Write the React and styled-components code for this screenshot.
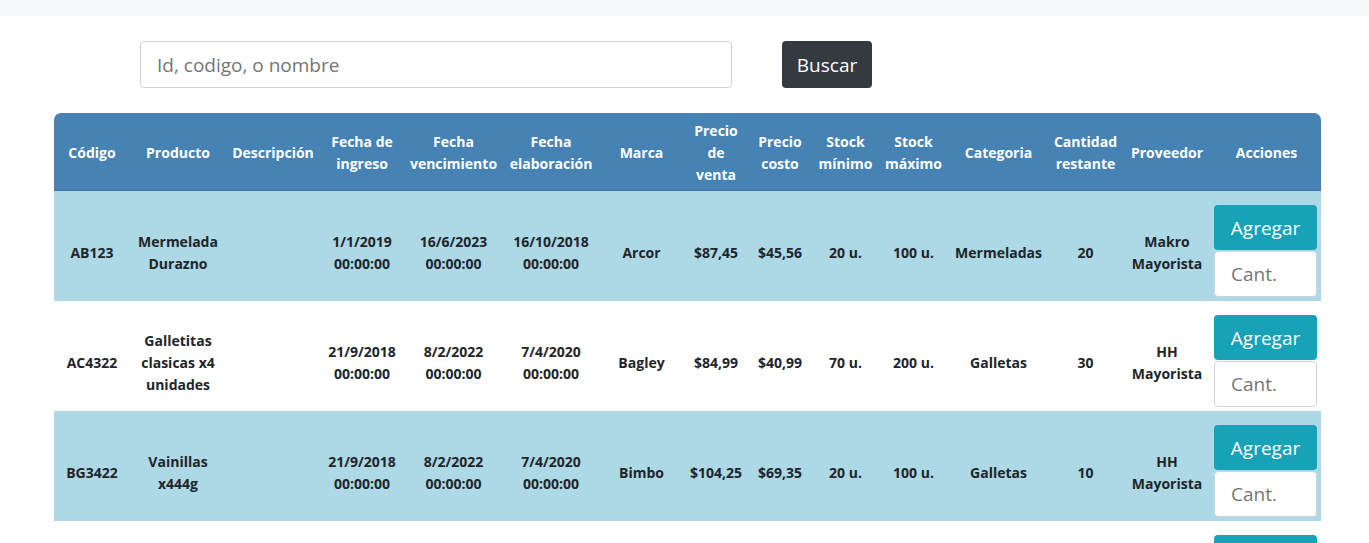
import React from 'react';
import styled, { createGlobalStyle } from "styled-components"

const GlobalStyle = createGlobalStyle`
    body {
        margin: 0;
        background: #fff;
        font-family: "Open Sans", "Noto Sans", sans-serif;
        color: #212529;
    }
`

const TopBar = styled.div`
    height: 16px;
    background: #f8f9fa;
`

const SearchRow = styled.div`
    display: flex;
    align-items: center;
    padding: 25px 0 0 140px;
    gap: 50px;
`

const SearchInput = styled.input`
    width: 592px;
    height: 47px;
    box-sizing: border-box;
    border: 1px solid #ced4da;
    border-radius: 4px;
    padding: 0 16px;
    font-family: inherit;
    font-size: 19px;
    color: #495057;
    outline: none;

    ::placeholder {
        color: #6c757d;
    }
`

const DarkButton = styled.button`
    width: 90px;
    height: 47px;
    border: none;
    border-radius: 4px;
    background: #343a40;
    color: #fff;
    font-family: inherit;
    font-size: 19px;
`

const Table = styled.table`
    margin: 25px 0 0 54px;
    width: 1267px;
    table-layout: fixed;
    border-collapse: separate;
    border-spacing: 0;
    font-size: 14px;
    font-weight: 700;
    line-height: 22px;
    text-align: center;

    th {
        background: #4682b4;
        color: #fff;
        padding: 7px 2px 4px;
        height: 66px;
        border-bottom: 1px solid #3f76a5;
        vertical-align: middle;
    }
    th:first-child { border-top-left-radius: 7px; }
    th:last-child { border-top-right-radius: 7px; }
`

const Row = styled.tr`
    background: ${props => props.shaded ? "#add8e6" : "#fff"};

    td {
        height: 92px;
        padding: 16px 2px 2px;
        vertical-align: middle;
        color: #212529;
    }
`

const ActionCell = styled.td`
    && {
        padding: 14px 3px 4px 2px;
    }
    display: flex;
`

const Actions = styled.div`
    display: flex;
    flex-direction: column;
    gap: 1px;
    width: 103px;
`

const AddButton = styled.button`
    height: 46px;
    border: none;
    border-radius: 4px;
    background: #17a2b8;
    color: #fff;
    font-family: inherit;
    font-size: 19px;
`

const QtyInput = styled.input`
    height: 47px;
    box-sizing: border-box;
    border: 1px solid #ced4da;
    border-radius: 4px;
    padding: 0 16px;
    font-family: inherit;
    font-size: 19px;
    background: #fff;
    outline: none;

    ::placeholder {
        color: #6c757d;
    }
`

const columns = [
    { label: ["Código"], width: 76 },
    { label: ["Producto"], width: 96 },
    { label: ["Descripción"], width: 94 },
    { label: ["Fecha de", "ingreso"], width: 84 },
    { label: ["Fecha", "vencimiento"], width: 99 },
    { label: ["Fecha", "elaboración"], width: 96 },
    { label: ["Marca"], width: 85 },
    { label: ["Precio", "de", "venta"], width: 64 },
    { label: ["Precio", "costo"], width: 64 },
    { label: ["Stock", "mínimo"], width: 67 },
    { label: ["Stock", "máximo"], width: 69 },
    { label: ["Categoria"], width: 101 },
    { label: ["Cantidad", "restante"], width: 73 },
    { label: ["Proveedor"], width: 90 },
    { label: ["Acciones"], width: 109 },
]

const productos = [
    {
        codigo: "AB123", producto: ["Mermelada", "Durazno"], descripcion: "",
        ingreso: "1/1/2019", vencimiento: "16/6/2023", elaboracion: "16/10/2018",
        marca: "Arcor", venta: "$87,45", costo: "$45,56", min: "20 u.", max: "100 u.",
        categoria: "Mermeladas", cantidad: 20, proveedor: ["Makro", "Mayorista"]
    },
    {
        codigo: "AC4322", producto: ["Galletitas", "clasicas x4", "unidades"], descripcion: "",
        ingreso: "21/9/2018", vencimiento: "8/2/2022", elaboracion: "7/4/2020",
        marca: "Bagley", venta: "$84,99", costo: "$40,99", min: "70 u.", max: "200 u.",
        categoria: "Galletas", cantidad: 30, proveedor: ["HH", "Mayorista"]
    },
    {
        codigo: "BG3422", producto: ["Vainillas", "x444g"], descripcion: "",
        ingreso: "21/9/2018", vencimiento: "8/2/2022", elaboracion: "7/4/2020",
        marca: "Bimbo", venta: "$104,25", costo: "$69,35", min: "20 u.", max: "100 u.",
        categoria: "Galletas", cantidad: 10, proveedor: ["HH", "Mayorista"]
    },
    {
        codigo: "CD1200", producto: ["Dulce de", "leche"], descripcion: "",
        ingreso: "3/3/2020", vencimiento: "3/3/2022", elaboracion: "1/3/2020",
        marca: "Sancor", venta: "$120,00", costo: "$80,50", min: "10 u.", max: "50 u.",
        categoria: "Lácteos", cantidad: 15, proveedor: ["Makro", "Mayorista"]
    },
]

const Lines = ({ lines }) => lines.map((l, i) => (
    <React.Fragment key={i}>{i > 0 && <br />}{l}</React.Fragment>
))

const Fecha = ({ value }) => <>{value}<br />00:00:00</>

const App = () => {
    return (
        <>
            <GlobalStyle />
            <TopBar />
            <SearchRow>
                <SearchInput placeholder="Id, codigo, o nombre" />
                <DarkButton>Buscar</DarkButton>
            </SearchRow>

            <Table>
                <colgroup>
                    {columns.map((c, i) => <col key={i} style={{ width: c.width }} />)}
                </colgroup>
                <thead>
                    <tr>
                        {columns.map((c, i) => <th key={i}><Lines lines={c.label} /></th>)}
                    </tr>
                </thead>
                <tbody>
                    {productos.map((p, i) => (
                        <Row key={p.codigo} shaded={i % 2 === 0}>
                            <td>{p.codigo}</td>
                            <td><Lines lines={p.producto} /></td>
                            <td>{p.descripcion}</td>
                            <td><Fecha value={p.ingreso} /></td>
                            <td><Fecha value={p.vencimiento} /></td>
                            <td><Fecha value={p.elaboracion} /></td>
                            <td>{p.marca}</td>
                            <td>{p.venta}</td>
                            <td>{p.costo}</td>
                            <td>{p.min}</td>
                            <td>{p.max}</td>
                            <td>{p.categoria}</td>
                            <td>{p.cantidad}</td>
                            <td><Lines lines={p.proveedor} /></td>
                            <ActionCell as="td">
                                <Actions>
                                    <AddButton>Agregar</AddButton>
                                    <QtyInput placeholder="Cant." />
                                </Actions>
                            </ActionCell>
                        </Row>
                    ))}
                </tbody>
            </Table>
        </>
    )
}

export default App
